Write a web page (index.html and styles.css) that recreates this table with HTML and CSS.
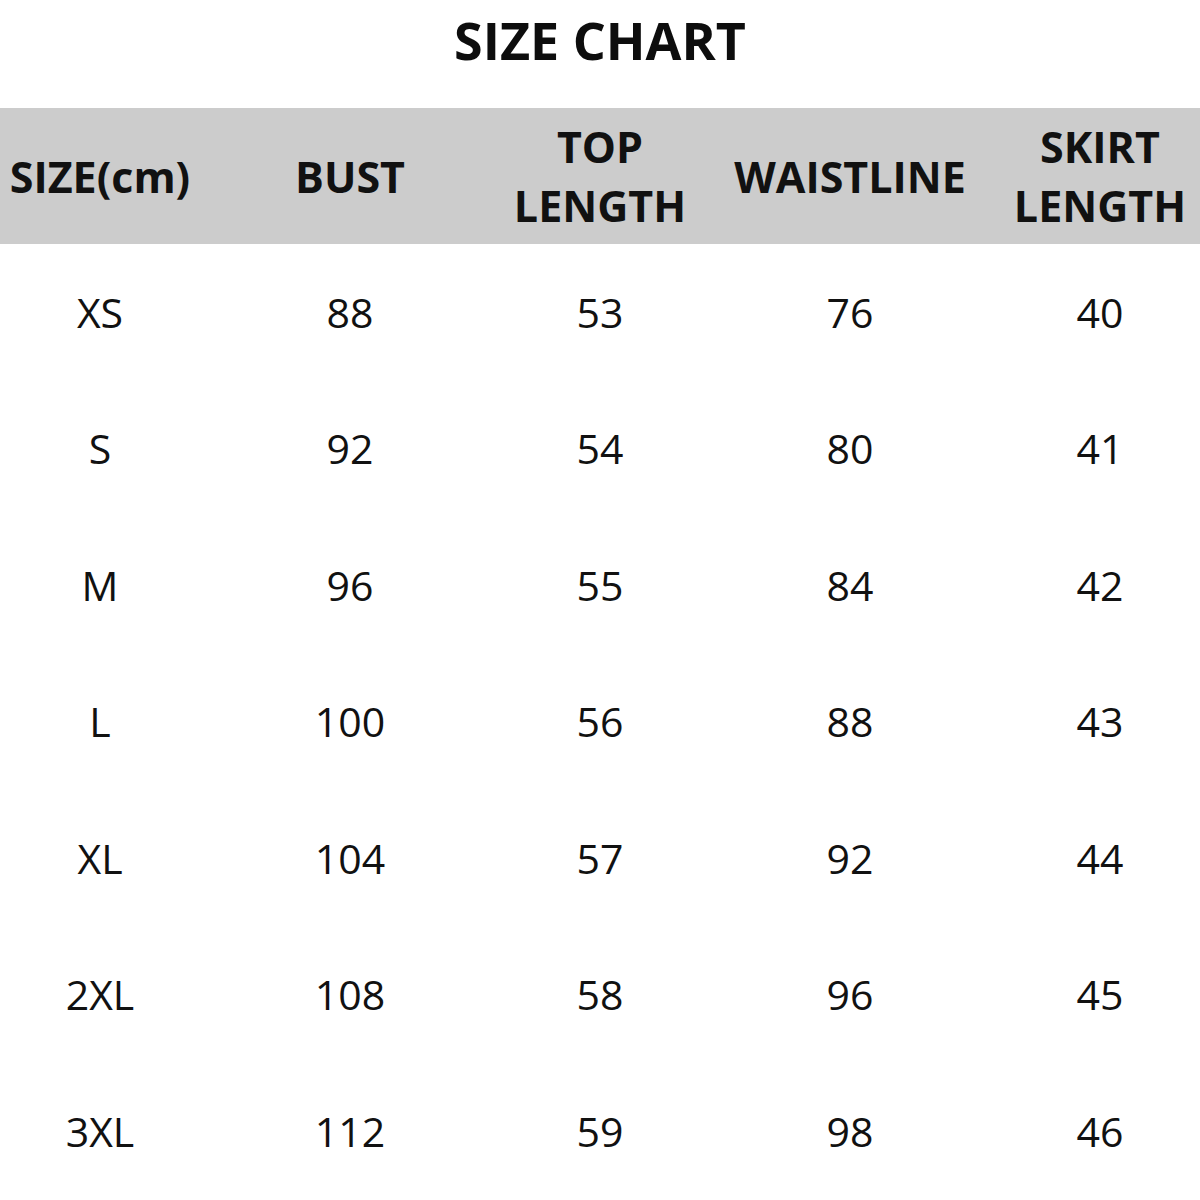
FILE: index.html
```html
<!DOCTYPE html>
<html>
<head>
<meta charset="utf-8">
<link rel="stylesheet" href="styles.css">
</head>
<body>
<div class="page">
  <h1 class="title">SIZE CHART</h1>
  <div class="chart">
    <div class="row head">
      <div class="cell">SIZE(cm)</div>
      <div class="cell">BUST</div>
      <div class="cell">TOP<br>LENGTH</div>
      <div class="cell">WAISTLINE</div>
      <div class="cell">SKIRT<br>LENGTH</div>
    </div>
    <div class="row"><div class="cell">XS</div><div class="cell">88</div><div class="cell">53</div><div class="cell">76</div><div class="cell">40</div></div>
    <div class="row"><div class="cell">S</div><div class="cell">92</div><div class="cell">54</div><div class="cell">80</div><div class="cell">41</div></div>
    <div class="row"><div class="cell">M</div><div class="cell">96</div><div class="cell">55</div><div class="cell">84</div><div class="cell">42</div></div>
    <div class="row"><div class="cell">L</div><div class="cell">100</div><div class="cell">56</div><div class="cell">88</div><div class="cell">43</div></div>
    <div class="row"><div class="cell">XL</div><div class="cell">104</div><div class="cell">57</div><div class="cell">92</div><div class="cell">44</div></div>
    <div class="row"><div class="cell">2XL</div><div class="cell">108</div><div class="cell">58</div><div class="cell">96</div><div class="cell">45</div></div>
    <div class="row"><div class="cell">3XL</div><div class="cell">112</div><div class="cell">59</div><div class="cell">98</div><div class="cell">46</div></div>
  </div>
</div>
</body>
</html>
```
FILE: styles.css
```css
html, body {
  margin: 0;
  padding: 0;
  background: #ffffff;
}
body {
  font-family: "Open Sans", "Noto Sans", sans-serif;
  color: #111111;
  width: 1200px;
  height: 1200px;
  overflow: hidden;
}
.page {
  display: flex;
  flex-direction: column;
}
.title {
  margin: 0;
  height: 108px;
  display: flex;
  align-items: center;
  justify-content: center;
  font-size: 52px;
  font-weight: 700;
  padding-bottom: 30px;
  box-sizing: border-box;
  color: #0d0d0d;
}
.chart {
  display: flex;
  flex-direction: column;
}
.row {
  display: grid;
  grid-template-columns: 200px 300px 200px 300px 200px;
  height: 136.5px;
  align-items: center;
  font-size: 41px;
  line-height: 1;
}
.row.head {
  background: #cccccc;
  height: 136px;
  font-weight: 700;
  font-size: 43px;
  line-height: 59px;
}
.cell {
  text-align: center;
  white-space: nowrap;
}
```
